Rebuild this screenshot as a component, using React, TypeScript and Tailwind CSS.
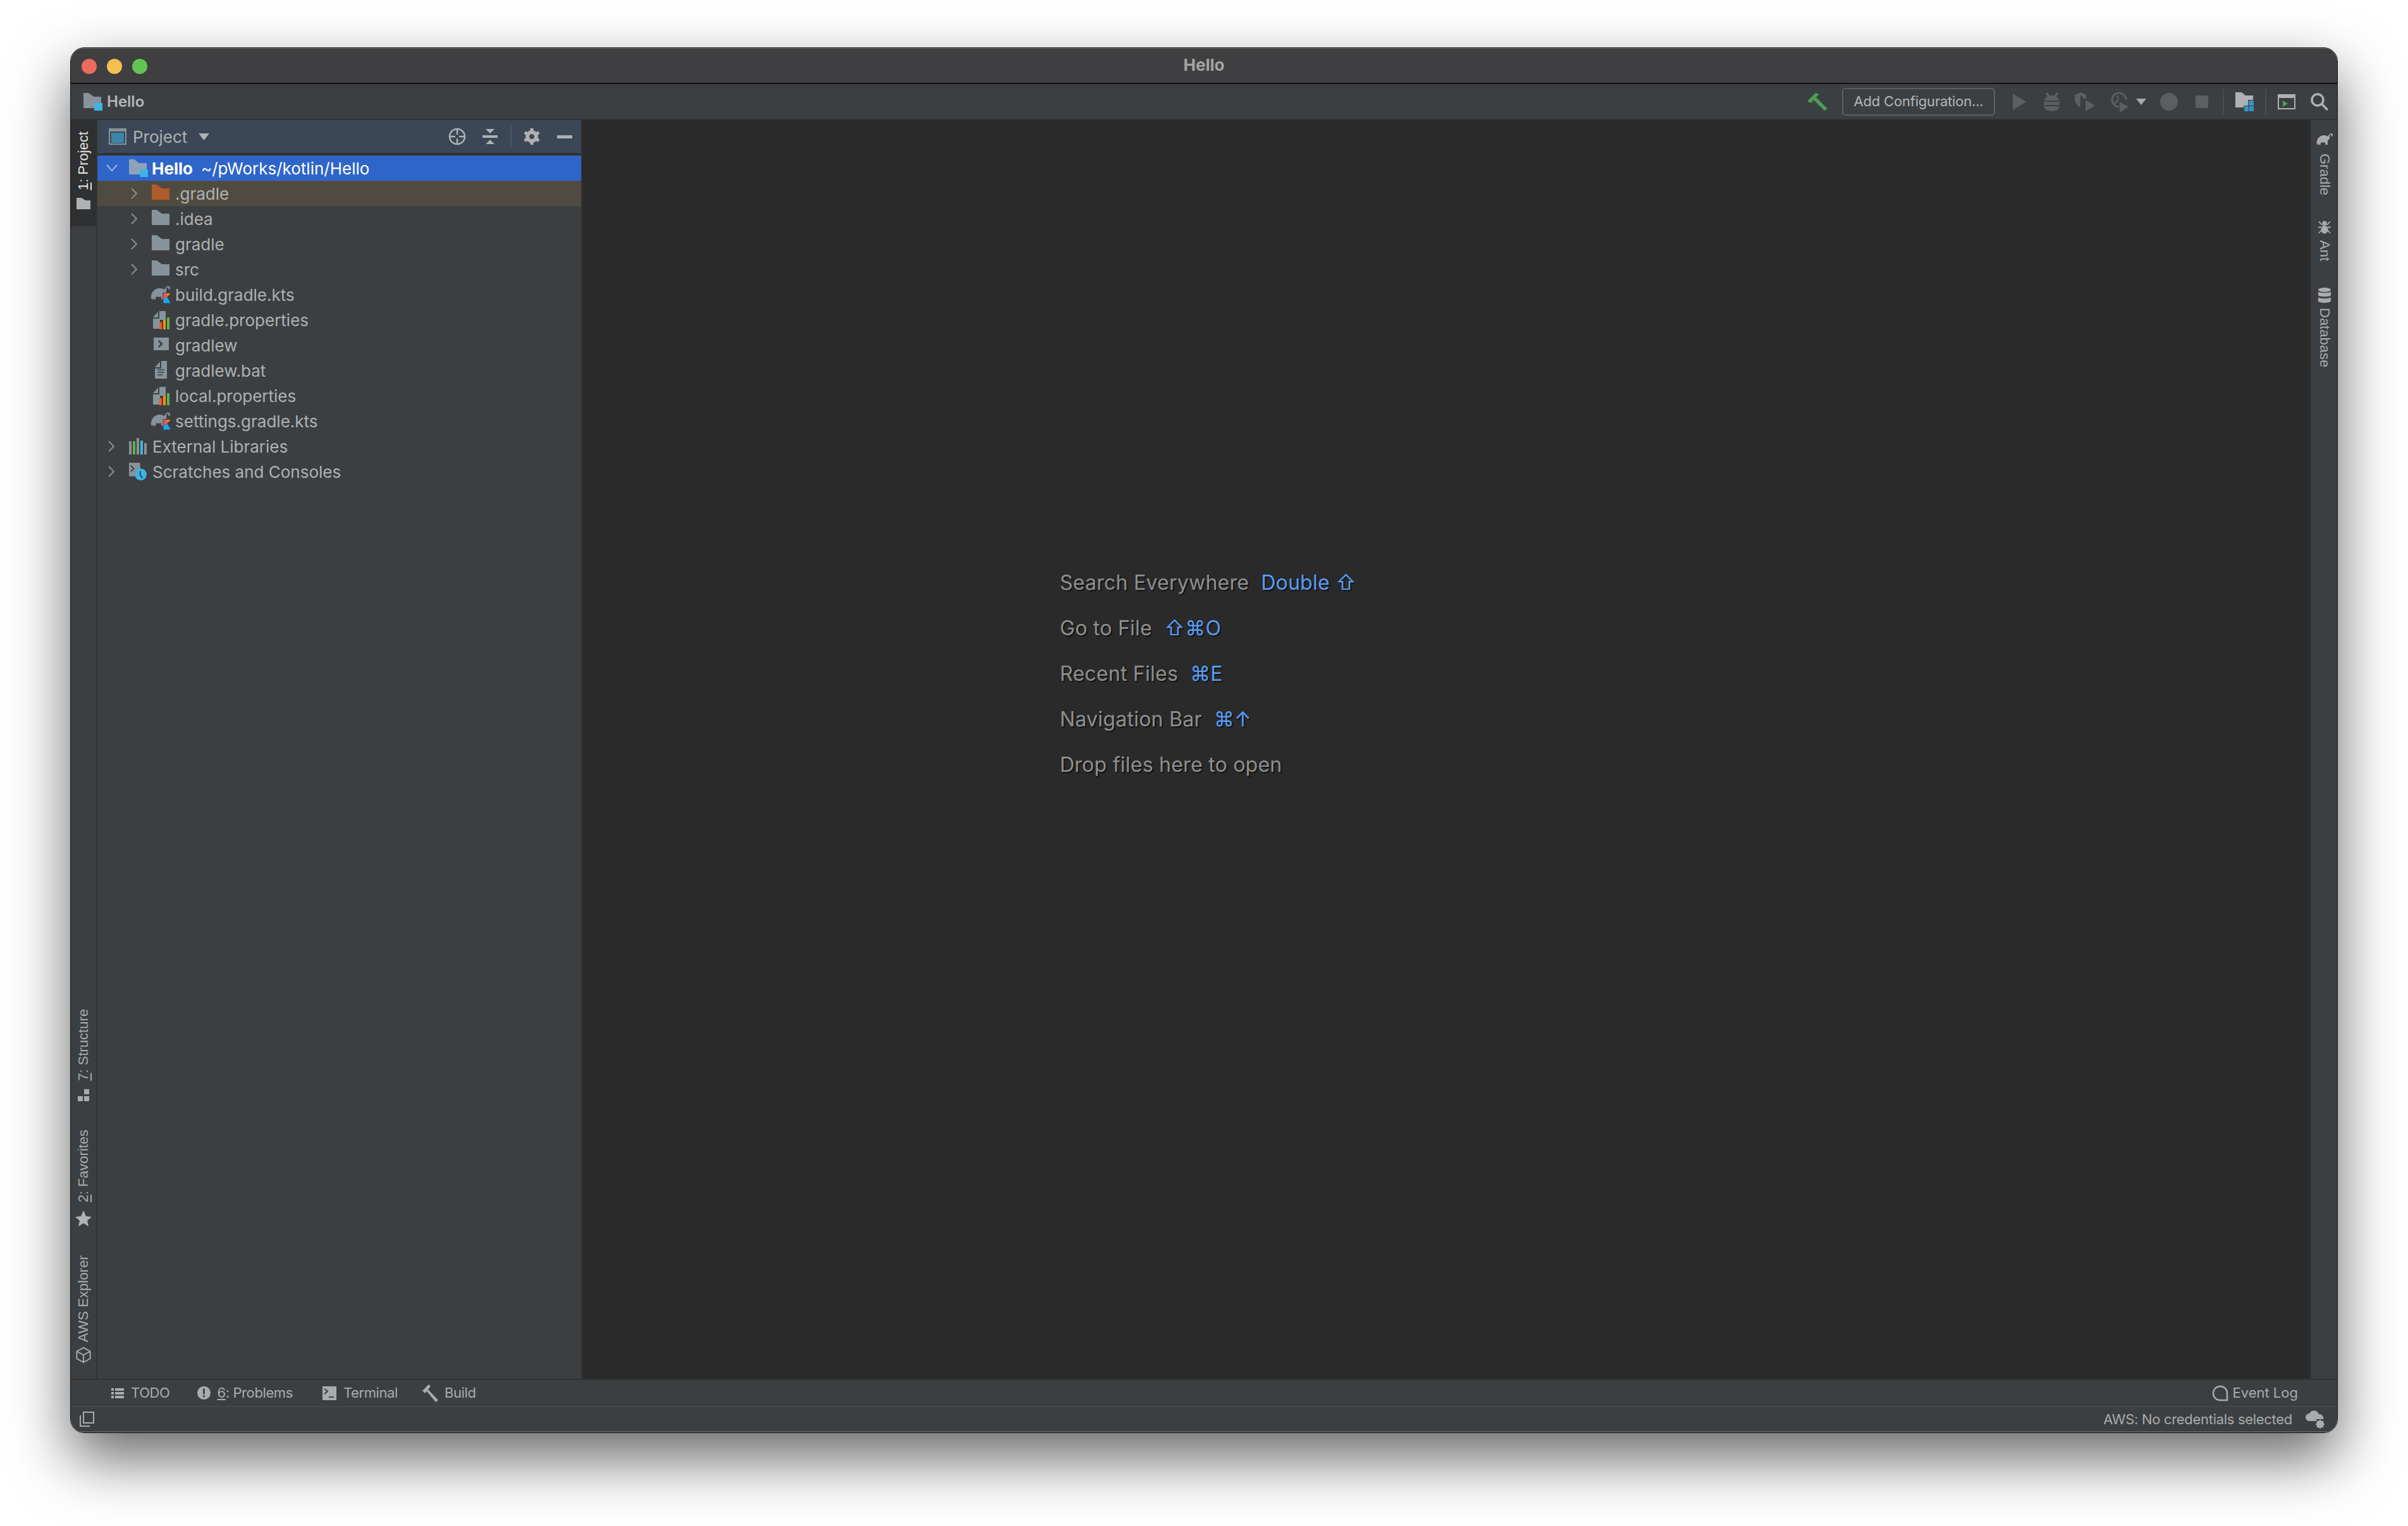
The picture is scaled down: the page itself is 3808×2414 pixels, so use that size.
import React from "react";

const ui = "font-['Inter','Noto_Sans',sans-serif]";

function Folder({ className, fill = "#87939a", badge = false }: { className?: string; fill?: string; badge?: boolean }) {
  return (
    <svg viewBox="0 0 30 28" className={className}>
      <path d="M0 0h8l8 6h12v18H0z" fill={fill} />
      {badge && <rect x="17" y="16" width="13" height="12" fill="#3cb4e6" />}
    </svg>
  );
}

function KotlinGradle() {
  return (
    <svg viewBox="0 0 32 30" className="w-[31px] h-[30px] ml-[-2px] mr-[-1px]">
      <path d="M1 22C0 14 4 7 12 5c4-1 8 0 11 2 1-3 3-6 6-6s4 3 2 6l-2-1c1-2 0-3-1-3-2 0-2 3-2 6 0 3-2 5-4 6v8h-4l-1-5c-3 1-6 1-8 0l-1 5H5v-4l-1 4z" fill="#87939a" />
      <path d="M20 12h13l-6 7 6 10H20z" fill="#3c3f41" />
      <path d="M26 13h7l-7 7-3-2z" fill="#f88909" />
      <path d="M21 13h5l-5 5z M21 18l5-5 2 5-7 6z" fill="#e4585f" />
      <path d="M21 29v-5l6-5 6 10z" fill="#18a6f2" />
    </svg>
  );
}

function PropsFile() {
  return (
    <svg viewBox="0 0 28 30" className="w-[28px] h-[30px]">
      <path d="M2 11l8-9v9z" fill="#87939a" />
      <path d="M12 1h10v14h-9v14H2V13h10z" fill="#87939a" />
      <rect x="12" y="19" width="4" height="11" fill="#ee5c22" />
      <rect x="18" y="15" width="4" height="15" fill="#f29111" />
      <rect x="24" y="11" width="4" height="19" fill="#62b543" />
    </svg>
  );
}

function ShellFile() {
  return (
    <svg viewBox="0 0 28 30" className="w-[28px] h-[30px]">
      <rect x="3" y="3" width="24" height="20" fill="#87939a" />
      <path d="M11 8l5 5-5 5" fill="none" stroke="#3c3f41" strokeWidth="2.5" />
    </svg>
  );
}

function TextFile() {
  return (
    <svg viewBox="0 0 28 30" className="w-[28px] h-[30px]">
      <path d="M5 10l8-9v9z" fill="#87939a" />
      <path d="M15 0h9v28H5V12h10z" fill="#87939a" />
      <path d="M9 14h11M9 18h11M9 22h8" stroke="#3c3f41" strokeWidth="1.6" />
    </svg>
  );
}

function LibIcon() {
  return (
    <svg viewBox="0 0 28 26" className="w-[28px] h-[26px]">
      <rect x="0" y="5" width="4" height="21" fill="#87939a" />
      <rect x="6" y="5" width="4" height="21" fill="#62b543" />
      <rect x="12" y="0" width="4" height="26" fill="#87939a" />
      <rect x="18" y="4" width="4" height="22" fill="#40b6e0" />
      <rect x="24" y="8" width="4" height="18" fill="#87939a" />
    </svg>
  );
}

function ScratchIcon() {
  return (
    <svg viewBox="0 0 30 30" className="w-[30px] h-[30px]">
      <path d="M0 0h19v15h-5v8H0z" fill="#87939a" />
      <path d="M3 5l5 5-5 5" fill="none" stroke="#3c3f41" strokeWidth="2" />
      <circle cx="20" cy="20" r="10" fill="#3cb4e6" />
      <path d="M19 14v7l4 5" fill="none" stroke="#3c3f41" strokeWidth="2" />
    </svg>
  );
}

function Chevron({ open = false, color = "#8c8e90" }: { open?: boolean; color?: string }) {
  if (open) {
    return (
      <svg viewBox="0 0 18 12" className="w-[18px] h-[12px] ml-[-3px] mr-[-4px]">
        <path d="M1 1l8 9 8-9" fill="none" stroke={color} strokeWidth="2" />
      </svg>
    );
  }
  return (
    <svg viewBox="0 0 11 18" className="w-[11px] h-[18px]">
      <path d="M1 1l8 8-8 8" fill="none" stroke={color} strokeWidth="2" />
    </svg>
  );
}

type Row = { name: string; level: 0 | 1; arrow?: boolean; icon: React.ReactNode; bg?: string };

const rows: Row[] = [
  { name: ".gradle", level: 1, arrow: true, icon: <Folder className="w-[30px] h-[28px] mr-[-2px]" fill="#b15a2b" />, bg: "bg-[#4f4b41]" },
  { name: ".idea", level: 1, arrow: true, icon: <Folder className="w-[30px] h-[28px] mr-[-2px]" /> },
  { name: "gradle", level: 1, arrow: true, icon: <Folder className="w-[30px] h-[28px] mr-[-2px]" /> },
  { name: "src", level: 1, arrow: true, icon: <Folder className="w-[30px] h-[28px] mr-[-2px]" /> },
  { name: "build.gradle.kts", level: 1, icon: <KotlinGradle /> },
  { name: "gradle.properties", level: 1, icon: <PropsFile /> },
  { name: "gradlew", level: 1, icon: <ShellFile /> },
  { name: "gradlew.bat", level: 1, icon: <TextFile /> },
  { name: "local.properties", level: 1, icon: <PropsFile /> },
  { name: "settings.gradle.kts", level: 1, icon: <KotlinGradle /> },
  { name: "External Libraries", level: 0, arrow: true, icon: <LibIcon /> },
  { name: "Scratches and Consoles", level: 0, arrow: true, icon: <ScratchIcon /> },
];

function TreeRow({ row }: { row: Row }) {
  return (
    <div className={`h-10 flex items-center ${row.level === 0 ? "pl-[17px]" : "pl-[53px]"} ${row.bg ?? ""}`}>
      <div className="w-[11px] flex justify-center">{row.arrow && <Chevron />}</div>
      <div className="ml-[22px] w-[28px] flex justify-center">{row.icon}</div>
      <span className="ml-[9px] text-[26px] text-[#afb1b3]">{row.name}</span>
    </div>
  );
}

function VerticalText({ children, flip = false, active = false }: { children: React.ReactNode; flip?: boolean; active?: boolean }) {
  return (
    <span
      className={`[writing-mode:vertical-rl] font-['Liberation_Sans',sans-serif] text-[22px] leading-[26px] whitespace-nowrap ${flip ? "rotate-180" : ""} ${active ? "text-[#e6e6e6]" : "text-[#a9abad]"}`}
    >
      {children}
    </span>
  );
}

function Hint({ label, keys }: { label: string; keys: string }) {
  return (
    <div className="h-[72px] flex items-center text-[32px] tracking-[0.25px] whitespace-nowrap [text-shadow:2px_2px_1px_rgba(0,0,0,0.55)]">
      <span className="text-[#8f8f8f]">{label}</span>
      {keys && <span className="ml-[19px] text-[#589df6]">{keys}</span>}
    </div>
  );
}

export default function App() {
  return (
    <div className={`w-[3808px] h-[2414px] bg-white pl-[111px] pt-[75px] overflow-hidden ${ui}`}>
      <div className="w-[3586px] h-[2192px] flex flex-col rounded-[22px] overflow-hidden border border-[#111] shadow-[0_40px_95px_rgba(0,0,0,0.6)]">
        {/* title bar */}
        <div className="h-[57px] shrink-0 relative flex items-center justify-center pb-[3px] bg-[#3f3f41] border-t border-[#6a6a6a] border-b-2 border-b-[#111]">
          <div className="absolute left-[17px] top-[16px] flex gap-4">
            <div className="w-6 h-6 rounded-full bg-[#ed6a5e]" />
            <div className="w-6 h-6 rounded-full bg-[#f4bf4f]" />
            <div className="w-6 h-6 rounded-full bg-[#61c554]" />
          </div>
          <span className="text-[26px] font-bold text-[#a4a4a4]">Hello</span>
        </div>

        {/* nav bar */}
        <div className="h-[57px] shrink-0 flex items-center bg-[#3c3f41] border-b-2 border-[#323232] pl-[20px] pr-[14px]">
          <Folder className="w-[30px] h-[28px]" badge />
          <span className="ml-[7px] text-[24px] font-semibold text-[#b4b6b8]">Hello</span>
          <div className="ml-auto flex items-center">
            <svg viewBox="0 0 32 28" className="w-[32px] h-[28px]">
              <path d="M0 13L13 0l6 2-5 5 18 18-5 3L10 11l-4 5z" fill="#499c54" />
            </svg>
            <div className="ml-[23px] w-[242px] h-[44px] flex items-center justify-center rounded-[6px] border-2 border-[#5e6060] text-[22px] text-[#b4b6b8] tracking-[-0.2px]">
              Add Configuration...
            </div>
            <svg viewBox="0 0 22 26" className="ml-[28px] w-[22px] h-[26px]">
              <path d="M0 0l21 13L0 26z" fill="#5c5e60" />
            </svg>
            <svg viewBox="0 0 26 30" className="ml-[27px] w-[26px] h-[30px]">
              <path d="M6 0l3 5h8l3-5 3 2-3 5c3 2 5 5 5 8v6c0 5-5 9-12 9S0 26 0 21v-6c0-3 2-6 5-8L3 2z" fill="#5c5e60" />
              <path d="M1 14h24M1 21h24" stroke="#3c3f41" strokeWidth="2" />
            </svg>
            <svg viewBox="0 0 32 30" className="ml-[23px] w-[32px] h-[30px]">
              <path d="M0 4l9-4 9 4v6h-5V7l-4-2v19C4 21 0 17 0 10z" fill="#5c5e60" />
              <path d="M17 12l15 9-15 9z" fill="#5c5e60" />
            </svg>
            <svg viewBox="0 0 30 34" className="ml-[23px] w-[30px] h-[34px]">
              <path d="M15 25a11 11 0 1 1 11-11" fill="none" stroke="#5c5e60" strokeWidth="3" />
              <path d="M13 7v8l-5 5" fill="none" stroke="#5c5e60" strokeWidth="2.5" />
              <path d="M16 17l14 8-14 9z" fill="#5c5e60" />
            </svg>
            <svg viewBox="0 0 16 10" className="ml-[12px] w-[16px] h-[10px]">
              <path d="M0 0h16l-8 10z" fill="#a7a9ab" />
            </svg>
            <div className="ml-[22px] w-[28px] h-[28px] rounded-full bg-[#5c5e60]" />
            <div className="ml-[28px] w-[20px] h-[20px] bg-[#5c5e60]" />
            <div className="ml-[23px] w-[2px] h-[40px] bg-[#4b4d4f]" />
            <svg viewBox="0 0 30 30" className="ml-[18px] w-[30px] h-[30px]">
              <path d="M0 0h10l6 5h12v7h-8v9h-7v3H0z" fill="#afb1b3" />
              <rect x="21" y="13" width="8" height="8" fill="#3592c4" />
              <rect x="14" y="22" width="7" height="8" fill="#3592c4" />
              <rect x="22" y="22" width="7" height="8" fill="#3592c4" />
            </svg>
            <div className="ml-[17px] w-[2px] h-[40px] bg-[#4b4d4f]" />
            <svg viewBox="0 0 28 24" className="ml-[18px] w-[28px] h-[24px]">
              <rect x="1" y="1" width="26" height="22" fill="none" stroke="#afb1b3" strokeWidth="2" />
              <rect x="1" y="1" width="26" height="5" fill="#afb1b3" />
              <path d="M8 10l8 5-8 5z" fill="#499c54" />
            </svg>
            <svg viewBox="0 0 28 28" className="ml-[24px] w-[28px] h-[28px]">
              <circle cx="11" cy="11" r="9" fill="none" stroke="#afb1b3" strokeWidth="3.5" />
              <path d="M17 17l10 10" stroke="#afb1b3" strokeWidth="3.5" />
            </svg>
          </div>
        </div>

        {/* main */}
        <div className="flex-1 min-h-0 flex">
          {/* left stripe */}
          <div className="w-[42px] shrink-0 flex flex-col justify-between bg-[#3c3f41] border-r-2 border-[#323232]">
            <div className="h-[168px] bg-[#2e3032] flex flex-col items-center pt-[18px]">
              <VerticalText flip active>
                <span className="underline">1</span>: Project
              </VerticalText>
              <svg viewBox="0 0 22 18" className="mt-[12px] w-[22px] h-[18px]">
                <path d="M0 0h8l6 4h8v14H0z" fill="#afb1b3" />
              </svg>
            </div>
            <div className="flex flex-col items-center pb-[25px]">
              <VerticalText flip>
                <span className="underline">7</span>: Structure
              </VerticalText>
              <svg viewBox="0 0 18 20" className="mt-[13px] w-[18px] h-[20px]">
                <path d="M0 11h8v8H0zM10 0h8v8h-8zM10 11h8v8h-8z" fill="#a9abad" />
              </svg>
              <div className="mt-[44px]">
                <VerticalText flip>
                  <span className="underline">2</span>: Favorites
                </VerticalText>
              </div>
              <svg viewBox="0 0 26 25" className="mt-[7px] w-[26px] h-[25px]">
                <path d="M13 0l4 9 9 1-7 6 2 9-8-5-8 5 2-9-7-6 9-1z" fill="#afb1b3" />
              </svg>
              <div className="mt-[46px]">
                <VerticalText flip>AWS Explorer</VerticalText>
              </div>
              <svg viewBox="0 0 24 26" className="mt-[2px] w-[24px] h-[25px]">
                <path d="M12 1l11 6v12l-11 6-11-6V7zM1 7l11 6 11-6M12 13v12" fill="none" stroke="#a9abad" strokeWidth="2" />
              </svg>
            </div>
          </div>

          {/* project panel */}
          <div className="w-[767px] shrink-0 flex flex-col bg-[#3c3f41] border-r-2 border-[#323232]">
            <div className="h-[52px] shrink-0 flex items-center bg-[#3b4756] pl-[18px] border-b-0">
              <svg viewBox="0 0 28 26" className="w-[28px] h-[26px]">
                <rect x="1" y="1" width="26" height="24" fill="none" stroke="#87939a" strokeWidth="2" />
                <rect x="1" y="1" width="26" height="4" fill="#87939a" />
                <rect x="4" y="7" width="20" height="16" fill="#3d86a8" />
              </svg>
              <span className="ml-[10px] text-[26px] text-[#afb1b3]">Project</span>
              <svg viewBox="0 0 17 11" className="ml-[18px] w-[17px] h-[11px]">
                <path d="M0 0h17l-8.5 11z" fill="#afb1b3" />
              </svg>
              <div className="ml-auto flex items-center pr-[14px]">
                <svg viewBox="0 0 28 28" className="w-[28px] h-[28px]">
                  <circle cx="14" cy="14" r="12" fill="none" stroke="#afb1b3" strokeWidth="2.5" />
                  <path d="M14 2v9M14 17v9M2 14h9M17 14h9" stroke="#afb1b3" strokeWidth="2.5" />
                </svg>
                <svg viewBox="0 0 24 24" className="ml-[26px] w-[24px] h-[24px]">
                  <path d="M5 0h14l-7 7zM0 10h24v4H0zM12 17l7 7H5z" fill="#afb1b3" />
                </svg>
                <div className="ml-[20px] w-[2px] h-[38px] bg-[#4b5561]" />
                <svg viewBox="0 0 26 26" className="ml-[19px] w-[26px] h-[26px]">
                  <circle cx="13" cy="13" r="7" fill="none" stroke="#afb1b3" strokeWidth="6" />
                  <path d="M13 0v6M13 20v6M1.7 6.5L7 9.5M19 16.5l5.3 3M1.7 19.5L7 16.5M19 9.5l5.3-3" stroke="#afb1b3" strokeWidth="5" />
                </svg>
                <div className="ml-[27px] w-[24px] h-[5px] bg-[#afb1b3]" />
              </div>
            </div>
            <div className="h-1 shrink-0 bg-[#323232]" />
            <div className="h-10 shrink-0 flex items-center bg-[#2f65ca] pl-[17px]">
              <div className="w-[11px] flex justify-center">
                <Chevron open color="#9fb4d8" />
              </div>
              <div className="ml-[22px] w-[30px]">
                <Folder className="w-[30px] h-[28px]" fill="#8fa1bb" badge />
              </div>
              <span className="ml-[6px] text-[26px] font-bold text-white">Hello</span>
              <span className="ml-[13px] text-[26px] text-white">~/pWorks/kotlin/Hello</span>
            </div>
            {rows.map((r) => (
              <TreeRow key={r.name} row={r} />
            ))}
          </div>

          {/* editor */}
          <div className="flex-1 min-w-0 bg-[#2a2a2a] border-r-2 border-[#323232] pl-[755px] pt-[696px]">
            <Hint label="Search Everywhere" keys="Double ⇧" />
            <Hint label="Go to File" keys="⇧⌘O" />
            <Hint label="Recent Files" keys="⌘E" />
            <Hint label="Navigation Bar" keys="⌘↑" />
            <Hint label="Drop files here to open" keys="" />
          </div>

          {/* right stripe */}
          <div className="w-[41px] shrink-0 flex flex-col items-center bg-[#3c3f41] pt-[20px]">
            <svg viewBox="0 0 32 24" className="w-[26px] h-[20px]">
              <path d="M1 22C0 14 4 7 12 5c4-1 8 0 11 2 1-3 3-6 6-6s4 3 2 6l-2-1c1-2 0-3-1-3-2 0-2 3-2 6 0 3-2 5-4 6v8h-4l-1-5c-3 1-6 1-8 0l-1 5H5v-4l-1 4z" fill="#a9abad" />
            </svg>
            <div className="mt-[13px]">
              <VerticalText>Gradle</VerticalText>
            </div>
            <svg viewBox="0 0 22 24" className="mt-[33px] w-[20px] h-[23px]">
              <circle cx="11" cy="5" r="4" fill="#a9abad" />
              <ellipse cx="11" cy="16" rx="6" ry="7" fill="#a9abad" />
              <path d="M1 2l6 6M21 2l-6 6M0 12h6M22 12h-6M1 22l5-5M21 22l-5-5" stroke="#a9abad" strokeWidth="2" />
            </svg>
            <div className="mt-[9px]">
              <VerticalText>Ant</VerticalText>
            </div>
            <svg viewBox="0 0 22 25" className="mt-[36px] w-[22px] h-[25px]">
              <ellipse cx="11" cy="3.5" rx="10" ry="3.5" fill="#a9abad" />
              <path d="M1 6c0 3 20 3 20 0v6c0 3-20 3-20 0zM1 15c0 3 20 3 20 0v6c0 4-20 4-20 0z" fill="#a9abad" />
            </svg>
            <div className="mt-[7px]">
              <VerticalText>Database</VerticalText>
            </div>
          </div>
        </div>

        {/* tool window bar */}
        <div className="h-[43px] shrink-0 flex items-center bg-[#3c3f41] border-t-2 border-[#323232] pl-[64px] pr-[62px] text-[22px] text-[#a9abad] tracking-[-0.4px]">
          <svg viewBox="0 0 20 16" className="w-[20px] h-[16px]">
            <path d="M0 0h4v4H0zM6 0h14v4H6zM0 6h4v4H0zM6 6h14v4H6zM0 12h4v4H0zM6 12h14v4H6z" fill="#a9abad" />
          </svg>
          <span className="ml-[11px]">TODO</span>
          <svg viewBox="0 0 22 22" className="ml-[44px] w-[21px] h-[21px]">
            <circle cx="11" cy="11" r="11" fill="#a9abad" />
            <path d="M9.5 4h3v9h-3zM9.5 15h3v3h-3z" fill="#3c3f41" />
          </svg>
          <span className="ml-[10px]">
            <span className="underline">6</span>: Problems
          </span>
          <svg viewBox="0 0 22 22" className="ml-[47px] w-[22px] h-[22px]">
            <rect width="22" height="22" fill="#a9abad" />
            <path d="M3 4l5 4-5 4M10 17h8" fill="none" stroke="#3c3f41" strokeWidth="2" />
          </svg>
          <span className="ml-[11px]">Terminal</span>
          <svg viewBox="0 0 26 28" className="ml-[39px] w-[26px] h-[28px]">
            <path d="M0 10L10 0l3 3-4 5 16 17-4 3L7 11l-3 3z" fill="#a9abad" />
          </svg>
          <span className="ml-[9px]">Build</span>
          <div className="ml-auto flex items-center tracking-normal">
            <svg viewBox="0 0 26 26" className="w-[26px] h-[26px]">
              <path d="M24 24H13a11 11 0 1 1 11-11z" fill="none" stroke="#a9abad" strokeWidth="2.5" />
            </svg>
            <span className="ml-[7px]">Event Log</span>
          </div>
        </div>

        {/* status bar */}
        <div className="h-[42px] shrink-0 flex items-center bg-[#3c3f41] border-t-2 border-[#45484a] border-b-2 border-b-[#5c5e60] pl-[13px] pr-[19px] text-[22px] text-[#a9abad]">
          <svg viewBox="0 0 24 24" className="w-[24px] h-[24px]">
            <path d="M7 1h16v17H7zM2 6v17h15" fill="none" stroke="#a9abad" strokeWidth="2" />
          </svg>
          <span className="ml-auto tracking-[-0.3px]">AWS: No credentials selected</span>
          <svg viewBox="0 0 32 30" className="ml-[20px] w-[32px] h-[30px]">
            <path d="M7 18a6 6 0 0 1 0-12c2-5 12-7 15 1 5 0 8 4 7 8H18v3z" fill="#a9abad" />
            <circle cx="24" cy="23" r="4" fill="none" stroke="#a9abad" strokeWidth="4" />
            <path d="M24 16v14M17 23h14M19 18l10 10M29 18L19 28" stroke="#a9abad" strokeWidth="2" />
          </svg>
        </div>
      </div>
    </div>
  );
}
